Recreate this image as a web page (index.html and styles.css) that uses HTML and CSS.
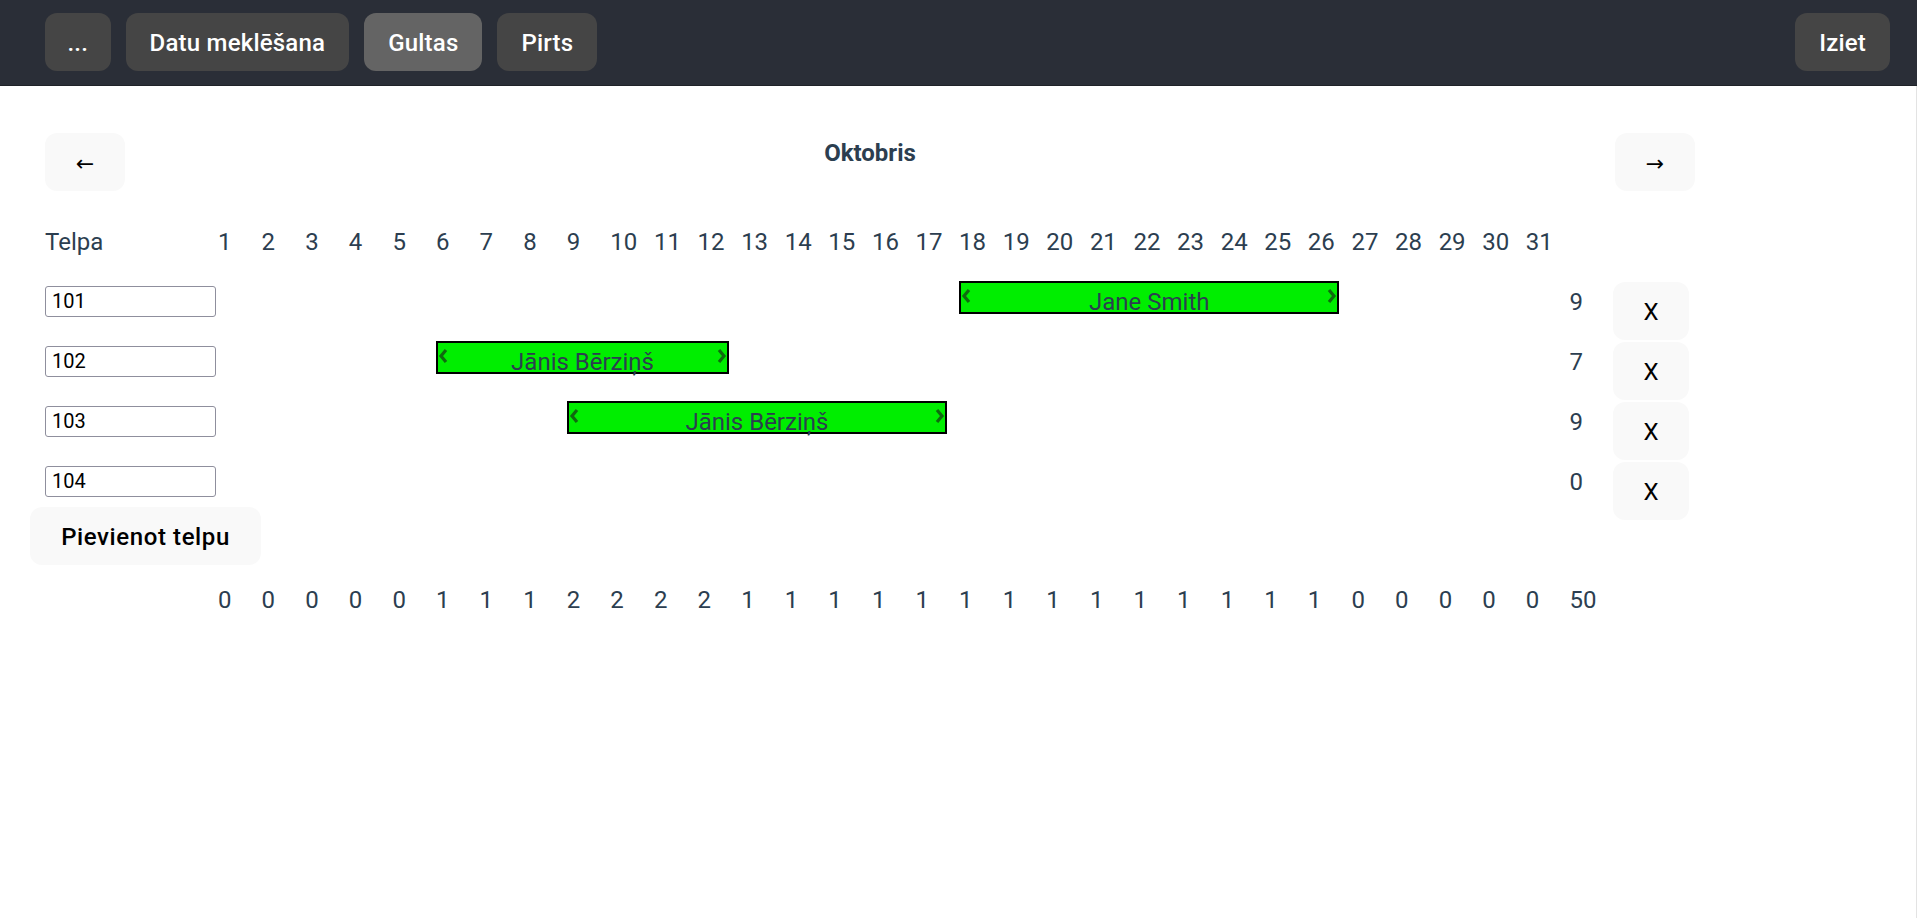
FILE: index.html
```html
<!DOCTYPE html>
<html lang="lv">
<head>
<meta charset="utf-8">
<title>Gultas</title>
<link rel="stylesheet" href="styles.css">
</head>
<body>
<nav class="topbar">
  <div class="nav-left">
    <button class="nav-btn dots">...</button>
    <button class="nav-btn">Datu meklēšana</button>
    <button class="nav-btn active">Gultas</button>
    <button class="nav-btn">Pirts</button>
  </div>
  <button class="nav-btn">Iziet</button>
</nav>
<main class="page">
  <div class="board">
    <div class="month-bar">
      <button class="btn arrow">←</button>
      <h2 class="month">Oktobris</h2>
      <button class="btn arrow">→</button>
    </div>

    <div class="cal-row head">
      <div class="label">Telpa</div>
      <div class="cell">1</div><div class="cell">2</div><div class="cell">3</div><div class="cell">4</div><div class="cell">5</div><div class="cell">6</div><div class="cell">7</div><div class="cell">8</div><div class="cell">9</div><div class="cell">10</div><div class="cell">11</div><div class="cell">12</div><div class="cell">13</div><div class="cell">14</div><div class="cell">15</div><div class="cell">16</div><div class="cell">17</div><div class="cell">18</div><div class="cell">19</div><div class="cell">20</div><div class="cell">21</div><div class="cell">22</div><div class="cell">23</div><div class="cell">24</div><div class="cell">25</div><div class="cell">26</div><div class="cell">27</div><div class="cell">28</div><div class="cell">29</div><div class="cell">30</div><div class="cell">31</div>
    </div>

    <div class="cal-row room">
      <input class="room-input" type="text" value="101">
      <div class="booking" style="grid-column: 19 / span 9">
        <svg class="chev" width="10" height="16" viewBox="0 0 10 16"><path d="M8 2 L3 8 L8 14"/></svg>
        <span class="guest">Jane Smith</span>
        <svg class="chev" width="10" height="16" viewBox="0 0 10 16"><path d="M2 2 L7 8 L2 14"/></svg>
      </div>
      <div class="count">9</div>
      <button class="btn del">X</button>
    </div>

    <div class="cal-row room">
      <input class="room-input" type="text" value="102">
      <div class="booking" style="grid-column: 7 / span 7">
        <svg class="chev" width="10" height="16" viewBox="0 0 10 16"><path d="M8 2 L3 8 L8 14"/></svg>
        <span class="guest">Jānis Bērziņš</span>
        <svg class="chev" width="10" height="16" viewBox="0 0 10 16"><path d="M2 2 L7 8 L2 14"/></svg>
      </div>
      <div class="count">7</div>
      <button class="btn del">X</button>
    </div>

    <div class="cal-row room">
      <input class="room-input" type="text" value="103">
      <div class="booking" style="grid-column: 10 / span 9">
        <svg class="chev" width="10" height="16" viewBox="0 0 10 16"><path d="M8 2 L3 8 L8 14"/></svg>
        <span class="guest">Jānis Bērziņš</span>
        <svg class="chev" width="10" height="16" viewBox="0 0 10 16"><path d="M2 2 L7 8 L2 14"/></svg>
      </div>
      <div class="count">9</div>
      <button class="btn del">X</button>
    </div>

    <div class="cal-row room">
      <input class="room-input" type="text" value="104">
      <div class="count">0</div>
      <button class="btn del">X</button>
    </div>

    <button class="btn add">Pievienot telpu</button>

    <div class="cal-row totals">
      <div class="label"></div>
      <div class="cell">0</div><div class="cell">0</div><div class="cell">0</div><div class="cell">0</div><div class="cell">0</div><div class="cell">1</div><div class="cell">1</div><div class="cell">1</div><div class="cell">2</div><div class="cell">2</div><div class="cell">2</div><div class="cell">2</div><div class="cell">1</div><div class="cell">1</div><div class="cell">1</div><div class="cell">1</div><div class="cell">1</div><div class="cell">1</div><div class="cell">1</div><div class="cell">1</div><div class="cell">1</div><div class="cell">1</div><div class="cell">1</div><div class="cell">1</div><div class="cell">1</div><div class="cell">1</div><div class="cell">0</div><div class="cell">0</div><div class="cell">0</div><div class="cell">0</div><div class="cell">0</div>
      <div class="cell">50</div>
    </div>
  </div>
</main>
</body>
</html>
```

FILE: styles.css
```css
* { box-sizing: border-box; }

html, body {
  margin: 0;
  padding: 0;
}

body {
  font-family: Roboto, "Liberation Sans", sans-serif;
  color: #2c3e50;
  background: #ffffff;
  min-height: 100vh;
  display: flex;
  flex-direction: column;
}

/* ---------- top navigation ---------- */
.topbar {
  display: flex;
  justify-content: space-between;
  align-items: flex-start;
  background: #2a2e37;
  padding: 13px 27px 14px 45px;
  border-bottom: 1px solid #1f2228;
}

.nav-left {
  display: flex;
  gap: 15px;
}

.nav-btn {
  font-family: inherit;
  font-size: 24px;
  font-weight: 500;
  letter-spacing: 0.2px;
  line-height: 28px;
  color: #ffffff;
  background: #454545;
  border: none;
  border-radius: 12px;
  padding: 16px 24px 14px;
  cursor: pointer;
}

.nav-btn.dots {
  padding-left: 22.5px;
  padding-right: 22.5px;
}

.nav-btn.active {
  background: #646464;
}

/* ---------- page ---------- */
.page {
  flex: 1;
  border-right: 1px solid #e3e3e3;
}

.board {
  width: 1650px;
  margin-left: 45px;
  padding-top: 47px;
}

.btn {
  font-family: inherit;
  font-size: 24px;
  font-weight: 500;
  line-height: 27.6px;
  color: #000000;
  background: #f9f9f9;
  border: 1.5px solid transparent;
  border-radius: 12px;
  padding: 16.4px 28.8px 12.4px;
  cursor: pointer;
}

.month-bar {
  display: flex;
  justify-content: space-between;
  align-items: flex-start;
}

.arrow {
  width: 80px;
  padding-left: 0;
  padding-right: 0;
  font-family: "DejaVu Sans", sans-serif;
  font-weight: 400;
  font-size: 22px;
}

.month {
  margin: 7px 0 0;
  font-size: 24px;
  font-weight: 700;
  line-height: 27.6px;
  color: #2c3e50;
}

/* ---------- calendar grid ---------- */
.cal-row {
  display: grid;
  grid-template-columns: 173px repeat(32, 43.6px) 76px;
  font-size: 24px;
  line-height: 27.6px;
}

.cal-row.head {
  margin-top: 35.6px;
  height: 55px;
  padding-top: 2px;
}

.cal-row.room {
  height: 60px;
  align-items: start;
}

.label,
.cell {
  white-space: nowrap;
}

.room-input {
  grid-column: 1;
  width: 171px;
  height: 31px;
  margin-top: 4px;
  border: 1px solid #8f8f9d;
  border-radius: 3px;
  padding: 0 6px;
  font-family: Roboto, sans-serif;
  font-size: 20px;
  color: #000000;
  background: #ffffff;
}

.booking {
  margin-top: -1px;
  margin-right: 12px;
  height: 33px;
  border: 2px solid #000000;
  background: #00ee00;
  display: flex;
  align-items: center;
  justify-content: space-between;
  padding: 0;
}

.chev {
  flex: none;
  width: 10px;
  height: 16px;
  margin-top: -3px;
}

.chev path {
  fill: none;
  stroke: #0f6a0f;
  stroke-width: 3.2;
}

.guest {
  font-size: 24px;
  line-height: 30px;
  padding-top: 9px;
  color: #2c3e50;
  white-space: nowrap;
}

.count {
  grid-column: 33;
  padding-top: 7px;
}

.del {
  grid-column: 34;
  width: 76px;
  padding-left: 0;
  padding-right: 0;
  font-weight: 400;
}

.add {
  margin-top: -15px;
  margin-left: -15px;
  width: 231px;
  padding-left: 0;
  padding-right: 0;
  letter-spacing: 0.6px;
}

.cal-row.totals {
  margin-top: 19px;
  padding-top: 3px;
}
```
